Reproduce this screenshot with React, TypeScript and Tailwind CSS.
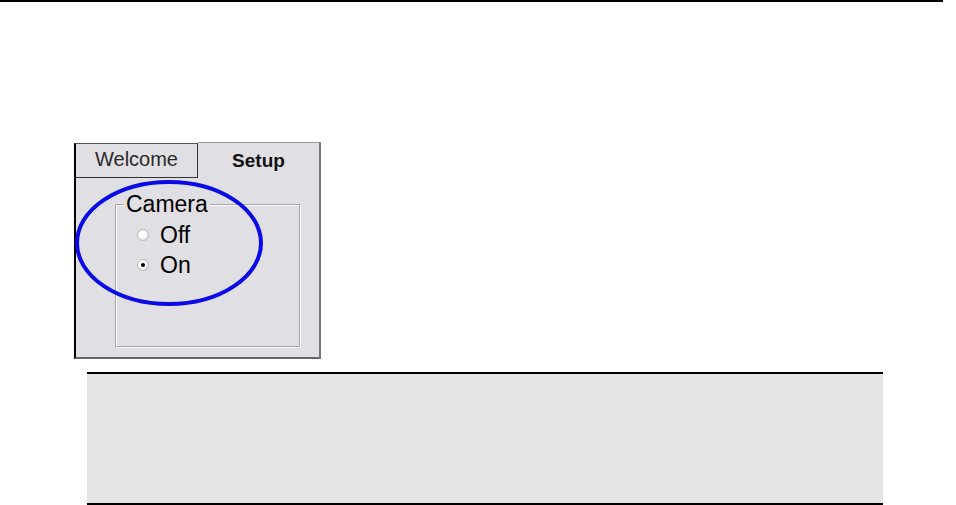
import React from "react";

function Radio({ checked }: { checked?: boolean }) {
  return (
    <span className="relative flex h-[12px] w-[12px] items-center justify-center rounded-full border border-[#b8b8b8] bg-[radial-gradient(circle_at_40%_40%,#ffffff_40%,#d4d4d4_100%)]">
      {checked && <span className="h-[4px] w-[4px] rounded-full bg-black" />}
    </span>
  );
}

export default function App() {
  return (
    <div
      className="relative h-[505px] w-[956px] overflow-hidden bg-white"
      style={{ fontFamily: '"Liberation Sans", Arial, sans-serif' }}
    >
      <div className="h-[2px] w-[943px] bg-black" />

      <div className="relative ml-[74px] mt-[140px] flex h-[217px] w-[247px] flex-col">
        {/* tabs */}
        <div className="flex h-[36px] items-end">
          <div className="flex h-[35px] w-[124px] items-center justify-center border-l-2 border-t border-r border-b border-l-black border-t-[#555] border-r-[#333] border-b-[#333] bg-[#e0dfe3] pb-[3px] text-[20px] text-[#2a2a2a]">
            Welcome
          </div>
          <div className="flex h-[36px] w-[123px] items-center justify-center border-t border-r-2 border-t-[#999] border-r-[#777] bg-[#e0dfe3] pt-[1px] text-[19px] font-bold text-[#111]">
            Setup
          </div>
        </div>
        {/* body */}
        <div className="flex flex-1 flex-col border-l-2 border-r-2 border-b-2 border-l-black border-r-[#777] border-b-[#666] bg-[#e0dfe3]">
          <div className="relative ml-[39px] mt-[26px] h-[143px] w-[185px] border border-[#a8a8a8] shadow-[1px_1px_0_#ffffff,inset_1px_1px_0_#ffffff]">
            <div className="absolute left-[8px] top-[-13px] bg-[#e0dfe3] px-[2px] text-[23px] leading-[24px] text-black">
              Camera
            </div>
            <div className="ml-[21px] mt-[18px] flex flex-col gap-[6px]">
              <div className="flex h-[24px] items-center gap-[11px] text-[23px] text-black">
                <Radio />
                <span>Off</span>
              </div>
              <div className="flex h-[24px] items-center gap-[11px] text-[23px] text-black">
                <Radio checked />
                <span>On</span>
              </div>
            </div>
          </div>
        </div>
        <svg
          className="pointer-events-none absolute left-0 top-[36px]"
          width="192"
          height="132"
          viewBox="0 0 192 132"
        >
          <ellipse cx="95" cy="65" rx="92" ry="61" fill="none" stroke="#0a0ae6" strokeWidth="4" />
        </svg>
      </div>

      <div className="ml-[87px] mt-[13px] h-[133px] w-[796px] border-t-2 border-b-2 border-black bg-[#e5e5e5]" />
    </div>
  );
}
